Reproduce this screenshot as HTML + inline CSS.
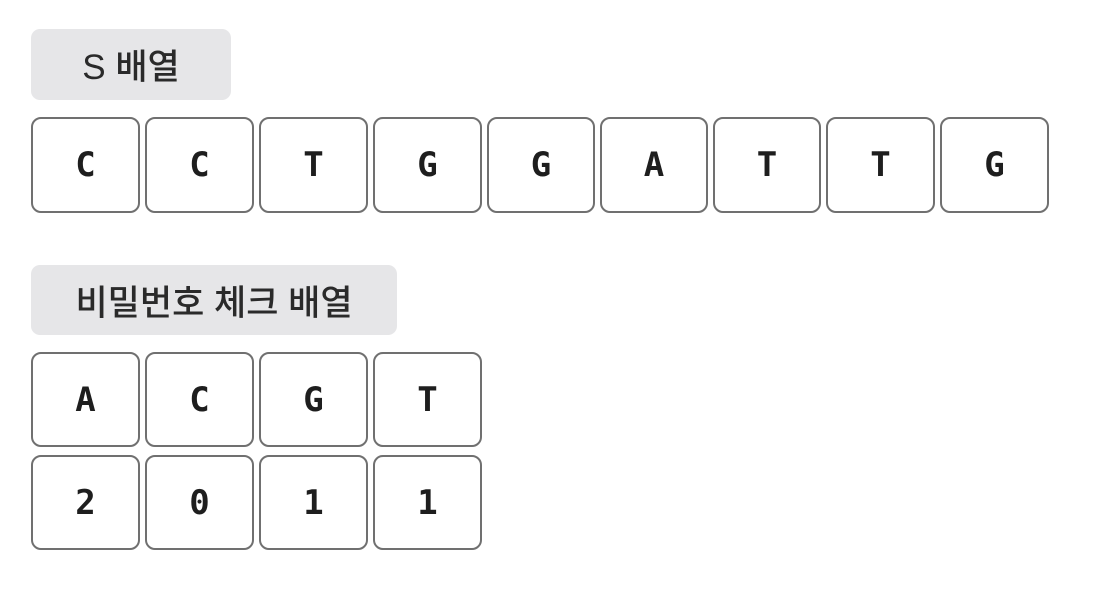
<!DOCTYPE html>
<html><head><meta charset="utf-8"><style>
body{margin:0;width:1111px;height:589px;background:#fff;position:relative;overflow:hidden}
.lab{position:absolute;background:#e6e6e8;border-radius:9px;font-family:"Liberation Sans","Noto Sans CJK KR",sans-serif;font-size:35px;color:#2a2a2a;display:flex;align-items:center;justify-content:center;font-weight:500}
.b{position:absolute;border:2px solid #707070;border-radius:10px;box-sizing:border-box;display:flex;align-items:center;justify-content:center;font-family:"DejaVu Sans Mono","Liberation Mono",monospace;font-size:34px;font-weight:bold;color:#1e1e1e;background:#fff}
</style></head><body>
<div class="lab" style="left:31px;top:29px;width:200px;height:71px">S 배열</div>
<div class="lab" style="left:31px;top:265px;width:366px;height:70px">비밀번호 체크 배열</div>
<div class="b" style="left:31px;top:117px;height:96px;width:109px">C</div>
<div class="b" style="left:145px;top:117px;height:96px;width:109px">C</div>
<div class="b" style="left:259px;top:117px;height:96px;width:109px">T</div>
<div class="b" style="left:373px;top:117px;height:96px;width:109px">G</div>
<div class="b" style="left:487px;top:117px;height:96px;width:108px">G</div>
<div class="b" style="left:600px;top:117px;height:96px;width:108px">A</div>
<div class="b" style="left:713px;top:117px;height:96px;width:108px">T</div>
<div class="b" style="left:826px;top:117px;height:96px;width:109px">T</div>
<div class="b" style="left:940px;top:117px;height:96px;width:109px">G</div>
<div class="b" style="left:31px;top:352px;height:95px;width:109px">A</div>
<div class="b" style="left:145px;top:352px;height:95px;width:109px">C</div>
<div class="b" style="left:259px;top:352px;height:95px;width:109px">G</div>
<div class="b" style="left:373px;top:352px;height:95px;width:109px">T</div>
<div class="b" style="left:31px;top:455px;height:95px;width:109px">2</div>
<div class="b" style="left:145px;top:455px;height:95px;width:109px">0</div>
<div class="b" style="left:259px;top:455px;height:95px;width:109px">1</div>
<div class="b" style="left:373px;top:455px;height:95px;width:109px">1</div>
</body></html>
